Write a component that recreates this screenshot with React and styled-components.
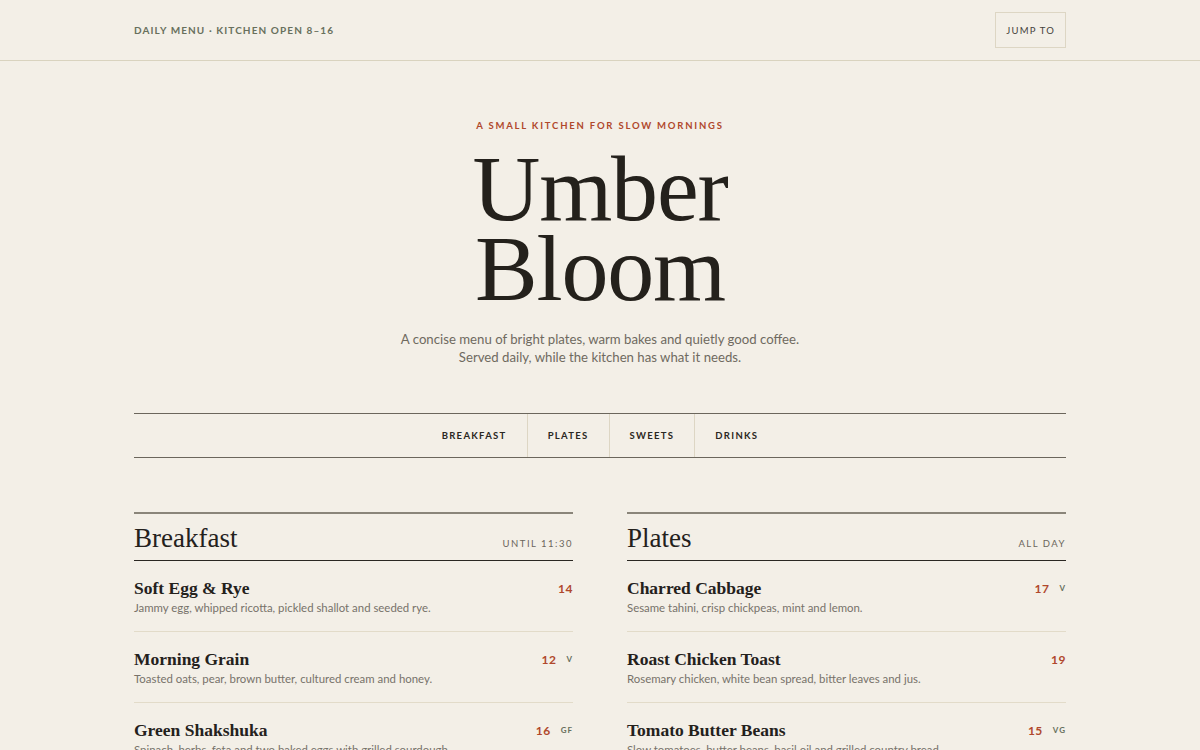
import React from "react";
import styled, { createGlobalStyle } from "styled-components";

const GlobalStyle = createGlobalStyle`
  body {
    margin: 0;
    background: #f3efe7;
    color: #24211c;
    font-family: Lato, "Noto Sans", sans-serif;
  }
`;

const sans = `Lato, "Noto Sans", sans-serif`;
const serif = `"Liberation Serif", "DejaVu Serif", serif`;

const TopBar = styled.header`
  border-bottom: 1px solid #d9d3bf;
`;

const TopInner = styled.div`
  width: 932px;
  margin: 0 auto;
  height: 60px;
  display: flex;
  align-items: center;
  justify-content: space-between;
`;

const Kicker = styled.span`
  font-family: ${sans};
  font-size: 10px;
  font-weight: 700;
  letter-spacing: 1.1px;
  color: #68705d;
  text-transform: uppercase;
`;

const JumpButton = styled.button`
  font-family: ${sans};
  font-size: 9.5px;
  letter-spacing: 1.2px;
  color: #45423c;
  background: transparent;
  border: 1px solid #ddd6c4;
  height: 36px;
  padding: 0 10px;
  text-transform: uppercase;
  cursor: pointer;
`;

const Page = styled.main`
  width: 932px;
  margin: 0 auto;
  padding-bottom: 80px;
`;

const Hero = styled.section`
  padding-top: 58px;
  text-align: center;
`;

const Eyebrow = styled.div`
  font-family: ${sans};
  font-size: 9.5px;
  line-height: 14px;
  font-weight: 700;
  letter-spacing: 1.8px;
  color: #b0482c;
  text-transform: uppercase;
`;

const Title = styled.h1`
  margin: 15px 0 0;
  font-family: ${serif};
  font-weight: 400;
  font-size: 94px;
  line-height: 80px;
  letter-spacing: -1.2px;
  color: #24211c;
`;

const Lede = styled.p`
  margin: 22px 0 0;
  font-family: ${sans};
  font-size: 13.2px;
  line-height: 18px;
  color: #6f6a5f;
`;

const Nav = styled.nav`
  margin-top: 47px;
  border-top: 1px solid #6b665c;
  border-bottom: 1px solid #6b665c;
  display: flex;
  justify-content: center;
`;

const NavItem = styled.a`
  display: flex;
  align-items: center;
  height: 43px;
  padding: 0 20px;
  font-family: ${sans};
  font-size: 9.5px;
  font-weight: 700;
  letter-spacing: 1.3px;
  color: #2a2722;
  text-decoration: none;
  text-transform: uppercase;
  border-left: ${({ $first }) => ($first ? "none" : "1px solid #ddd6c4")};
`;

const Columns = styled.div`
  margin-top: 54px;
  display: grid;
  grid-template-columns: 1fr 1fr;
  column-gap: 54px;
  row-gap: 60px;
`;

const Section = styled.section`
  border-top: 2px solid #8a857a;
`;

const SectionHead = styled.div`
  display: flex;
  justify-content: space-between;
  align-items: baseline;
  padding: 8px 0 6px;
  border-bottom: 1px solid #2a2722;
`;

const SectionTitle = styled.h2`
  margin: 0;
  font-family: ${serif};
  font-weight: 400;
  font-size: 27px;
  line-height: 32px;
  color: #24211c;
`;

const SectionMeta = styled.span`
  font-family: ${sans};
  font-size: 9.5px;
  letter-spacing: 1.5px;
  color: #6b665c;
  text-transform: uppercase;
`;

const Item = styled.div`
  padding: 16px 0 15px;
  border-bottom: 1px solid #e2dbc9;
  &:last-child {
    border-bottom: none;
  }
`;

const ItemRow = styled.div`
  display: flex;
  justify-content: space-between;
  align-items: center;
`;

const ItemName = styled.h3`
  margin: 0;
  font-family: ${serif};
  font-weight: 700;
  font-size: 17.5px;
  line-height: 22px;
  color: #24211c;
`;

const PriceGroup = styled.div`
  display: flex;
  align-items: center;
  gap: 10px;
`;

const Price = styled.span`
  font-family: ${sans};
  font-size: 12px;
  font-weight: 700;
  letter-spacing: 0.5px;
  color: #b0482c;
`;

const Tag = styled.span`
  font-family: ${sans};
  font-size: 8px;
  font-weight: 700;
  letter-spacing: 1px;
  color: #68705d;
`;

const ItemDesc = styled.p`
  margin: 1px 0 0;
  font-family: ${sans};
  font-size: 11.4px;
  line-height: 16px;
  color: #77726a;
`;

const menu = [
  {
    title: "Breakfast",
    meta: "Until 11:30",
    items: [
      { name: "Soft Egg & Rye", price: 14, desc: "Jammy egg, whipped ricotta, pickled shallot and seeded rye." },
      { name: "Morning Grain", price: 12, tag: "V", desc: "Toasted oats, pear, brown butter, cultured cream and honey." },
      { name: "Green Shakshuka", price: 16, tag: "GF", desc: "Spinach, herbs, feta and two baked eggs with grilled sourdough." },
      { name: "Buttermilk Pancakes", price: 13, tag: "V", desc: "Stewed plums, whipped butter and a little maple." },
    ],
  },
  {
    title: "Plates",
    meta: "All day",
    items: [
      { name: "Charred Cabbage", price: 17, tag: "V", desc: "Sesame tahini, crisp chickpeas, mint and lemon." },
      { name: "Roast Chicken Toast", price: 19, desc: "Rosemary chicken, white bean spread, bitter leaves and jus." },
      { name: "Tomato Butter Beans", price: 15, tag: "VG", desc: "Slow tomatoes, butter beans, basil oil and grilled country bread." },
      { name: "Smoked Trout Salad", price: 18, tag: "GF", desc: "New potatoes, dill, radish and horseradish cream." },
    ],
  },
  {
    title: "Sweets",
    meta: "From the oven",
    items: [
      { name: "Cardamom Bun", price: 5, tag: "V", desc: "Laminated dough, orange sugar and cardamom." },
      { name: "Olive Oil Cake", price: 7, tag: "V", desc: "Lemon curd, crème fraîche and toasted almonds." },
    ],
  },
  {
    title: "Drinks",
    meta: "Hot & cold",
    items: [
      { name: "Filter Coffee", price: 4, tag: "VG", desc: "A rotating single origin, brewed by the cup." },
      { name: "Flat White", price: 5, desc: "Double ristretto with textured whole milk." },
    ],
  },
];

const navLinks = ["Breakfast", "Plates", "Sweets", "Drinks"];

const MenuSection = ({ section }) => (
  <Section id={section.title.toLowerCase()}>
    <SectionHead>
      <SectionTitle>{section.title}</SectionTitle>
      <SectionMeta>{section.meta}</SectionMeta>
    </SectionHead>
    {section.items.map((item) => (
      <Item key={item.name}>
        <ItemRow>
          <ItemName>{item.name}</ItemName>
          <PriceGroup>
            <Price>{item.price}</Price>
            {item.tag && <Tag>{item.tag}</Tag>}
          </PriceGroup>
        </ItemRow>
        <ItemDesc>{item.desc}</ItemDesc>
      </Item>
    ))}
  </Section>
);

const App = () => {
  return (
    <>
      <GlobalStyle />
      <TopBar>
        <TopInner>
          <Kicker>Daily menu · Kitchen open 8–16</Kicker>
          <JumpButton>Jump to</JumpButton>
        </TopInner>
      </TopBar>
      <Page>
        <Hero>
          <Eyebrow>A small kitchen for slow mornings</Eyebrow>
          <Title>
            Umber
            <br />
            Bloom
          </Title>
          <Lede>
            A concise menu of bright plates, warm bakes and quietly good coffee.
            <br />
            Served daily, while the kitchen has what it needs.
          </Lede>
        </Hero>
        <Nav>
          {navLinks.map((link, i) => (
            <NavItem key={link} href={`#${link.toLowerCase()}`} $first={i === 0}>
              {link}
            </NavItem>
          ))}
        </Nav>
        <Columns>
          {menu.map((section) => (
            <MenuSection key={section.title} section={section} />
          ))}
        </Columns>
      </Page>
    </>
  );
};

export default App;
